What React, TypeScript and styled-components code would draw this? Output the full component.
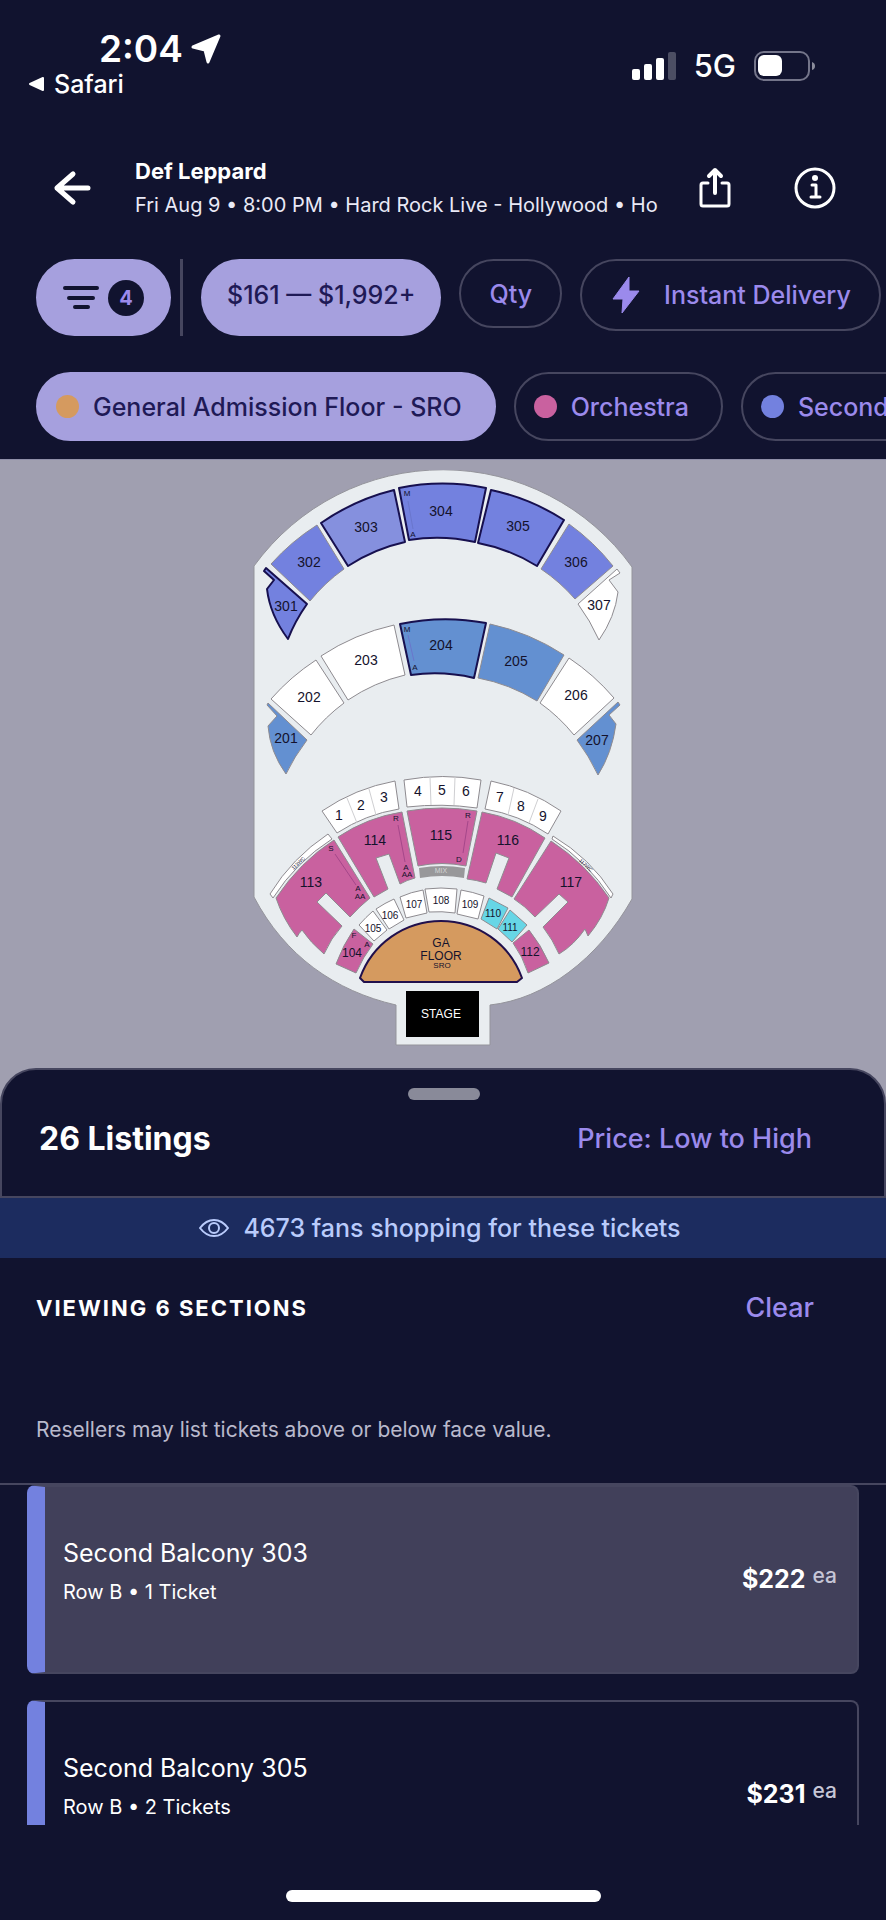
import React from 'react';
import styled, { createGlobalStyle } from 'styled-components';

const NAVY = '#11132f';
const LILAC = '#a6a0de';
const VIOLET = '#9b8aec';
const LINE = '#46465f';

const GlobalStyle = createGlobalStyle`
  *, *::before, *::after { box-sizing: border-box; }
  html { background: ${NAVY}; }
  body {
    margin: 0;
    background: ${NAVY};
    color: #fff;
    font-family: Inter, "Noto Sans", sans-serif;
    overflow-x: hidden;
  }
  button { font: inherit; color: inherit; background: none; border: 0; padding: 0; cursor: pointer; }
  h1, h2, h3, p { margin: 0; font-weight: inherit; }
`;

const Screen = styled.div`
  min-height: 100vh;
  display: flex;
  flex-direction: column;
  background: ${NAVY};
`;

/* Status bar */
const StatusBar = styled.div`
  display: flex;
  justify-content: space-between;
  align-items: flex-start;
  padding: 26px 70px 0 28px;
  height: 150px;
`;
const StatusLeft = styled.div`
  display: flex;
  flex-direction: column;
`;
const Clock = styled.div`
  display: flex;
  align-items: center;
  gap: 8px;
  padding-left: 71px;
  font-size: 37px;
  line-height: 46px;
  font-weight: 600;
`;
const BackToApp = styled.a`
  display: flex;
  align-items: center;
  gap: 9px;
  color: #fff;
  text-decoration: none;
  font-size: 25px;
  line-height: 24px;
  font-weight: 500;
`;
const StatusRight = styled.div`
  display: flex;
  align-items: center;
  gap: 18px;
  padding-top: 22px;
  font-size: 31px;
  line-height: 36px;
  font-weight: 500;
`;

/* Event header */
const Header = styled.header`
  display: flex;
  align-items: center;
  height: 76px;
  padding: 0 50px 0 52px;
`;
const IconButton = styled.button`
  display: flex;
  flex: none;
`;
const EventInfo = styled.div`
  flex: 1;
  min-width: 0;
  padding: 0 20px 0 42px;
  white-space: nowrap;
  overflow: hidden;
`;
const EventName = styled.h1`
  font-size: 22px;
  line-height: 34px;
  font-weight: 700;
`;
const EventMeta = styled.p`
  font-size: 20px;
  line-height: 34px;
  color: #e9e9f6;
`;
const HeaderActions = styled.div`
  display: flex;
  gap: 62px;
  align-items: center;
`;

/* Filters */
const FilterRow = styled.div<{ $top: number }>`
  display: flex;
  align-items: flex-start;
  gap: 18px;
  padding: ${(p) => p.$top}px 0 0 36px;
  overflow: hidden;
  white-space: nowrap;
`;
const Pill = styled.button<{ $active?: boolean; $height?: number; $pad?: string }>`
  flex: none;
  display: flex;
  align-items: center;
  height: ${(p) => p.$height ?? 69}px;
  padding: ${(p) => p.$pad ?? '0 28px'};
  border-radius: 40px;
  border: 2px solid ${(p) => (p.$active ? LILAC : LINE)};
  background: ${(p) => (p.$active ? LILAC : 'transparent')};
  color: ${(p) => (p.$active ? '#1f1a56' : VIOLET)};
  font-size: 25px;
  line-height: 32px;
  font-weight: 500;
`;
const FilterGroup = styled.div`
  display: flex;
  gap: 9px;
`;
const Divider = styled.div`
  width: 3px;
  height: 77px;
  background: ${LINE};
`;
const CountBadge = styled.span`
  display: flex;
  align-items: center;
  justify-content: center;
  width: 36px;
  height: 36px;
  margin-left: 9px;
  border-radius: 50%;
  background: ${NAVY};
  color: ${VIOLET};
  font-size: 20px;
  line-height: 24px;
  font-weight: 700;
`;
const Dot = styled.span<{ $color: string }>`
  width: 23px;
  height: 23px;
  margin-right: 14px;
  border-radius: 50%;
  background: ${(p) => p.$color};
`;
const BoltLabel = styled.span`
  margin-left: 24px;
`;

/* Seat map */
const MapPanel = styled.section`
  display: flex;
  justify-content: center;
  margin-top: 18px;
  padding: 10px 0 60px;
  background: #a09fb0;
  border-top: 1px solid #8f8fa8;
`;

/* Listings sheet */
const Sheet = styled.section`
  margin-top: -40px;
  height: 130px;
  padding: 18px 72px 0 37px;
  border: 2px solid ${LINE};
  border-radius: 36px 36px 0 0;
  background: ${NAVY};
`;
const Grabber = styled.div`
  width: 72px;
  height: 12px;
  margin: 0 auto;
  border-radius: 6px;
  background: #898a99;
  transform: translateX(18px);
`;
const SheetRow = styled.div`
  display: flex;
  justify-content: space-between;
  align-items: center;
  padding-top: 17px;
`;
const SheetTitle = styled.h2`
  font-size: 32px;
  line-height: 44px;
  font-weight: 700;
`;
const LinkButton = styled.button`
  color: ${VIOLET};
  font-size: 27px;
  line-height: 44px;
  font-weight: 500;
`;
const FansBanner = styled.div`
  display: flex;
  align-items: center;
  justify-content: center;
  gap: 14px;
  height: 60px;
  padding-right: 6px;
  background: #1c2c5f;
  color: #b9cbfb;
  font-size: 25px;
  line-height: 32px;
  font-weight: 500;
`;
const SectionBar = styled.div`
  display: flex;
  justify-content: space-between;
  align-items: center;
  padding: 28px 72px 0 36px;
`;
const SectionTitle = styled.h2`
  font-size: 22px;
  line-height: 44px;
  font-weight: 700;
  letter-spacing: 2px;
`;
const Notice = styled.p`
  padding: 82px 36px 35px;
  font-size: 21px;
  line-height: 36px;
  color: #b9b9cc;
`;
const ListingList = styled.div`
  display: flex;
  flex-direction: column;
  gap: 26px;
  height: 342px;
  padding: 0 27px;
  overflow: hidden;
  border-top: 2px solid ${LINE};
`;
const ListingCard = styled.button<{ $selected?: boolean }>`
  flex: none;
  display: flex;
  justify-content: space-between;
  align-items: flex-start;
  height: 189px;
  padding: 48px 20px 0 18px;
  text-align: left;
  border: 2px solid ${LINE};
  border-left: 18px solid #7381df;
  border-radius: 8px;
  background: ${(p) => (p.$selected ? '#41405a' : 'transparent')};
`;
const ListingName = styled.h3`
  font-size: 25px;
  line-height: 36px;
`;
const ListingMeta = styled.p`
  padding-top: 3px;
  font-size: 20px;
  line-height: 36px;
`;
const Price = styled.div`
  display: flex;
  gap: 7px;
  padding-top: 26px;
  font-size: 25px;
  line-height: 36px;
  font-weight: 700;
`;
const Each = styled.span`
  color: #c6c6d6;
  font-size: 21px;
  line-height: 30px;
  font-weight: 500;
`;
const HomeBar = styled.div`
  width: 315px;
  height: 12px;
  margin: 65px auto 18px;
  border-radius: 6px;
  background: #fff;
`;

type Tone = 'violet' | 'hover' | 'blue' | 'white' | 'pink' | 'cyan';
const TONES: Record<Tone, string> = {
  violet: '#7381df',
  hover: '#8590de',
  blue: '#6390d1',
  white: '#ffffff',
  pink: '#c9619f',
  cyan: '#67d6e6',
};

interface Shape {
  d: string;
  tone: Tone;
  picked?: boolean;
}

const SHAPES: Shape[] = [
  { tone: 'violet', d: 'M271 563A220 220 0 0 1 317 524L344 568A172 172 0 0 0 310 600Z' },
  { tone: 'hover', picked: true, d: 'M321 522A220 220 0 0 1 394 489L405 541A172 172 0 0 0 348 565Z' },
  { tone: 'violet', picked: true, d: 'M399 487A220 220 0 0 1 486 487L475 541A172 172 0 0 0 409 539Z' },
  { tone: 'violet', picked: true, d: 'M491 489A220 220 0 0 1 564 519L537 565A172 172 0 0 0 478 542Z' },
  { tone: 'violet', d: 'M569 523A220 220 0 0 1 613 565L575 598A172 172 0 0 0 541 568Z' },
  { tone: 'violet', picked: true, d: 'M264 570L266 567L307 603Q295 620 288 638Q270 614 267 588L274 579Z' },
  { tone: 'white', d: 'M617 568L620 572L609 579L618 591Q615 616 599 639Q590 619 578 603Z' },
  { tone: 'white', d: 'M271 698A220 220 0 0 1 316 659L344 702A172 172 0 0 0 311 734Z' },
  { tone: 'white', d: 'M321 655A220 220 0 0 1 394 624L405 674A172 172 0 0 0 348 699Z' },
  { tone: 'blue', picked: true, d: 'M400 623A220 220 0 0 1 486 622L474 677A172 172 0 0 0 411 674Z' },
  { tone: 'blue', d: 'M490 623A220 220 0 0 1 564 654L537 700A172 172 0 0 0 478 677Z' },
  { tone: 'white', d: 'M569 657A220 220 0 0 1 614 697L574 734A172 172 0 0 0 540 702Z' },
  { tone: 'blue', d: 'M267 704L268 702L307 739Q294 756 286 773Q270 751 268 725L277 715Z' },
  { tone: 'blue', d: 'M618 701L620 704L609 714L616 723Q612 752 598 774Q589 755 577 739Z' },
  { tone: 'white', d: 'M322 810A190 190 0 0 1 395 780L399 808A160 160 0 0 0 337 832Z' },
  { tone: 'white', d: 'M404 779Q443 772 481 779L477 807Q442 802 407 806Z' },
  { tone: 'white', d: 'M491 780A190 190 0 0 1 561 810L548 833A160 160 0 0 0 485 808Z' },
  { tone: 'pink', d: 'M407 810Q442 804 477 810L466 865Q442 860 418 865Z' },
  { tone: 'pink', d: 'M338 836A160 160 0 0 1 402 811L415 877Q407 879 400 883L389 853L376 857L388 888L374 896Z' },
  { tone: 'pink', d: 'M334 839L370 897Q360 905 350 916L326 892L317 901L342 925Q331 937 324 953Q310 941 302 929Q299 932 297 936Q283 918 276 897Q300 861 334 839Z' },
  { tone: 'white', d: 'M328 833L332 838Q296 861 273 897L270 893Q292 857 328 833Z' },
  { tone: 'pink', d: 'M482 811A160 160 0 0 1 545 837L512 896L497 888L509 857L496 852L486 882Q476 879 467 878Z' },
  { tone: 'pink', d: 'M551 840Q586 863 609 897Q603 917 588 935L585 928Q574 944 559 953Q553 939 543 926L568 901L559 893L535 916Q525 905 514 898Z' },
  { tone: 'white', d: 'M553 835Q590 857 613 893L611 897Q587 860 552 838Z' },
  { tone: 'white', d: 'M373 910L387 929L374 940L359 924Q366 916 373 910Z' },
  { tone: 'white', d: 'M394 898L404 919L389 928L376 908Q385 902 394 898Z' },
  { tone: 'white', d: 'M423 889L427 912L406 917L400 896Q411 891 423 889Z' },
  { tone: 'white', d: 'M425 888Q441 886 457 888L455 912Q442 910 429 911Z' },
  { tone: 'white', d: 'M461 889Q473 891 484 895L478 918L457 913Z' },
  { tone: 'cyan', d: 'M489 897L508 907L497 928L481 918Z' },
  { tone: 'cyan', d: 'M510 909L527 924L512 941L498 928Z' },
  { tone: 'pink', d: 'M529 929Q541 944 549 962L528 972Q523 956 513 942Z' },
  { tone: 'pink', d: 'M354 928L373 943Q363 956 356 972L336 963Q343 944 354 928Z' },
];

type Label = [text: string, x: number, y: number];
const SECTION_LABELS: Label[] = [
  ['301', 286, 605], ['302', 309, 561], ['303', 366, 526], ['304', 441, 510],
  ['305', 518, 525], ['306', 576, 561], ['307', 599, 604],
  ['201', 286, 737], ['202', 309, 696], ['203', 366, 659], ['204', 441, 644],
  ['205', 516, 660], ['206', 576, 694], ['207', 597, 739],
  ['1', 339, 814], ['2', 361, 804], ['3', 384, 796], ['4', 418, 790], ['5', 442, 789],
  ['6', 466, 790], ['7', 500, 796], ['8', 521, 805], ['9', 543, 815],
  ['113', 311, 881], ['114', 375, 839], ['115', 441, 834], ['116', 508, 839], ['117', 571, 881],
];
const SMALL_LABELS: Label[] = [
  ['105', 373, 927], ['106', 390, 914], ['107', 414, 903], ['108', 441, 899],
  ['109', 470, 903], ['110', 493, 912], ['111', 510, 926],
];
const ROW_LABELS: Label[] = [
  ['M', 407, 492], ['A', 413, 533], ['M', 407, 628], ['A', 415, 666],
  ['R', 396, 817], ['A', 406, 866], ['AA', 407, 873],
  ['S', 331, 847], ['A', 358, 887], ['AA', 360, 895],
  ['R', 468, 814], ['D', 459, 858], ['F', 354, 934], ['A', 367, 943],
];

const Labels = ({ items, size }: { items: Label[]; size: number }) => (
  <g fontSize={size}>
    {items.map(([text, x, y]) => (
      <text key={`${text}-${x}-${y}`} x={x} y={y}>{text}</text>
    ))}
  </g>
);

const SeatMap = () => (
  <svg width="380" height="578" viewBox="253 469 380 578" role="img" aria-label="Seat map">
    <path
      d="M254 565A233 233 0 0 1 632 566V898C598 958 545 998 490 1004V1044H396V1004C335 990 285 955 254 896Z"
      fill="#e9edf0"
      stroke="#94949b"
    />
    {SHAPES.map((s) => (
      <path
        key={s.d}
        d={s.d}
        fill={TONES[s.tone]}
        stroke={s.picked ? '#17104f' : '#8e8b90'}
        strokeWidth={s.picked ? 2 : 1}
        strokeLinejoin="round"
      />
    ))}
    <path
      d="M347 797L357 822M369 788L376 814M430 776L431 804M455 776L454 804M514 787L508 814M538 798L529 822"
      stroke="#cfcfd2"
      fill="none"
    />
    <path d="M408 500L413 528M408 634L414 660" stroke="#6a76cc" fill="none" />
    <path d="M398 824L405 861M335 853L356 884M468 820L463 852" stroke="#a5478a" fill="none" />
    <path d="M419 867Q442 863 465 867L464 877Q442 873 420 877Z" fill="#98989a" />
    <path
      d="M360 977A86 86 0 0 1 522 977L517 981H364Z"
      fill="#d59a5f"
      stroke="#21104c"
      strokeWidth="2"
      strokeLinejoin="round"
    />
    <rect x="406" y="990" width="73" height="46" fill="#000" />
    <g
      fontFamily='"Liberation Sans", Arial, sans-serif'
      textAnchor="middle"
      dominantBaseline="central"
      fill="#14122c"
    >
      <Labels items={SECTION_LABELS} size={14} />
      <Labels items={[['104', 352, 952], ['112', 530, 951]]} size={12} />
      <Labels items={SMALL_LABELS} size={10} />
      <Labels items={ROW_LABELS} size={8} />
      <text fontSize="5" transform="translate(298 862) rotate(-43)">113WC</text>
      <text fontSize="5" transform="translate(586 864) rotate(43)">117WC</text>
      <text fontSize="7" x="441" y="869" fill="#d5d5d5">MIX</text>
      <text fontSize="12" x="441" y="942">GA</text>
      <text fontSize="12" x="441" y="955">FLOOR</text>
      <text fontSize="8" x="442" y="964">SRO</text>
      <text fontSize="12" x="441" y="1013" fill="#fff">STAGE</text>
    </g>
  </svg>
);

const LocationIcon = () => (
  <svg width="30" height="30" viewBox="0 0 30 30">
    <path d="M28 2L17 28L14 16L2 13Z" fill="#fff" stroke="#fff" strokeWidth="3" strokeLinejoin="round" />
  </svg>
);
const SignalIcon = () => (
  <svg width="44" height="29" viewBox="0 0 44 29" fill="#fff">
    <rect x="0" y="17" width="8" height="11" rx="2" />
    <rect x="12" y="12" width="8" height="16" rx="2" />
    <rect x="24" y="6" width="8" height="22" rx="2" />
    <rect x="36" y="0" width="8" height="28" rx="2" opacity="0.25" />
  </svg>
);
const BatteryIcon = () => (
  <svg width="62" height="30" viewBox="0 0 62 30">
    <rect x="1" y="1" width="54" height="28" rx="9" fill="none" stroke="#74758a" strokeWidth="2" />
    <rect x="4" y="4" width="24" height="21" rx="6" fill="#fff" />
    <path d="M58 11Q61 12 61 15Q61 18 58 19Z" fill="#8b8c9c" />
  </svg>
);
const BackIcon = () => (
  <svg width="41" height="38" viewBox="0 0 41 38" fill="none" stroke="#fff" strokeWidth="5" strokeLinecap="round" strokeLinejoin="round">
    <path d="M36 19H5M21 5L5 19L21 33" />
  </svg>
);
const ShareIcon = () => (
  <svg width="34" height="42" viewBox="0 0 34 42" fill="none" stroke="#fff" strokeWidth="3" strokeLinecap="round" strokeLinejoin="round">
    <path d="M10 16H5Q3 16 3 18V37Q3 39 5 39H29Q31 39 31 37V18Q31 16 29 16H24" />
    <path d="M17 26V3M11 9L17 3L23 9" strokeWidth="4" />
  </svg>
);
const InfoIcon = () => (
  <svg width="42" height="42" viewBox="0 0 42 42" fill="none" stroke="#fff" strokeLinecap="round" strokeLinejoin="round">
    <circle cx="21" cy="21" r="19" strokeWidth="3" />
    <path d="M18 18H22V30M17 30H26" strokeWidth="3" />
    <circle cx="21" cy="11" r="3" fill="#fff" stroke="none" />
  </svg>
);
const FilterIcon = () => (
  <svg width="36" height="26" viewBox="0 0 36 26" stroke={NAVY} strokeWidth="4" strokeLinecap="round">
    <path d="M2 3H34M6 13H30M12 22H25" />
  </svg>
);
const BoltIcon = () => (
  <svg width="28" height="38" viewBox="0 0 28 38" fill={VIOLET} stroke={VIOLET} strokeLinejoin="round">
    <path d="M17 1L1 23H11L10 37L27 15H17L17 1Z" />
  </svg>
);
const EyeIcon = () => (
  <svg width="30" height="20" viewBox="0 0 30 20" fill="none" stroke="#b9cbfb" strokeWidth="2">
    <path d="M1 10Q7 2 15 2Q23 2 29 10Q23 18 15 18Q7 18 1 10Z" strokeLinejoin="round" />
    <circle cx="15" cy="10" r="5" />
  </svg>
);

const LISTINGS = [
  { name: 'Second Balcony 303', meta: 'Row B • 1 Ticket', price: '$222', selected: true },
  { name: 'Second Balcony 305', meta: 'Row B • 2 Tickets', price: '$231', selected: false },
];

export default function App() {
  return (
    <Screen>
      <GlobalStyle />
      <StatusBar>
        <StatusLeft>
          <Clock>2:04 <LocationIcon /></Clock>
          <BackToApp href="#safari">
            <svg width="17" height="16" viewBox="0 0 17 16">
              <path d="M15 2V14L2 8Z" fill="#fff" stroke="#fff" strokeWidth="2" strokeLinejoin="round" />
            </svg>
            Safari
          </BackToApp>
        </StatusLeft>
        <StatusRight>
          <SignalIcon />
          5G
          <BatteryIcon />
        </StatusRight>
      </StatusBar>

      <Header>
        <IconButton aria-label="Back"><BackIcon /></IconButton>
        <EventInfo>
          <EventName>Def Leppard</EventName>
          <EventMeta>Fri Aug 9 • 8:00 PM • Hard Rock Live - Hollywood • Ho</EventMeta>
        </EventInfo>
        <HeaderActions>
          <IconButton aria-label="Share"><ShareIcon /></IconButton>
          <IconButton aria-label="Event information"><InfoIcon /></IconButton>
        </HeaderActions>
      </Header>

      <FilterRow $top={33}>
        <FilterGroup>
          <Pill $active $height={77} $pad="0 25px" aria-label="Filters">
            <FilterIcon />
            <CountBadge>4</CountBadge>
          </Pill>
          <Divider />
        </FilterGroup>
        <Pill $active $height={77} $pad="0 24px 6px">$161 — $1,992+</Pill>
        <Pill>Qty</Pill>
        <Pill $height={72} $pad="0 28px 0 30px">
          <BoltIcon />
          <BoltLabel>Instant Delivery</BoltLabel>
        </Pill>
      </FilterRow>
      <FilterRow $top={36}>
        <Pill $active $pad="0 32px 0 18px"><Dot $color="#d59a5f" />General Admission Floor - SRO</Pill>
        <Pill $pad="0 32px 0 18px"><Dot $color="#c9619f" />Orchestra</Pill>
        <Pill $pad="0 32px 0 18px"><Dot $color="#7381df" />Second</Pill>
      </FilterRow>

      <MapPanel><SeatMap /></MapPanel>

      <Sheet>
        <Grabber />
        <SheetRow>
          <SheetTitle>26 Listings</SheetTitle>
          <LinkButton>Price: Low to High</LinkButton>
        </SheetRow>
      </Sheet>
      <FansBanner>
        <EyeIcon />
        4673 fans shopping for these tickets
      </FansBanner>
      <SectionBar>
        <SectionTitle>VIEWING 6 SECTIONS</SectionTitle>
        <LinkButton>Clear</LinkButton>
      </SectionBar>
      <Notice>Resellers may list tickets above or below face value.</Notice>
      <ListingList>
        {LISTINGS.map((l) => (
          <ListingCard key={l.name} $selected={l.selected}>
            <div>
              <ListingName>{l.name}</ListingName>
              <ListingMeta>{l.meta}</ListingMeta>
            </div>
            <Price>{l.price}<Each>ea</Each></Price>
          </ListingCard>
        ))}
      </ListingList>
      <HomeBar />
    </Screen>
  );
}
